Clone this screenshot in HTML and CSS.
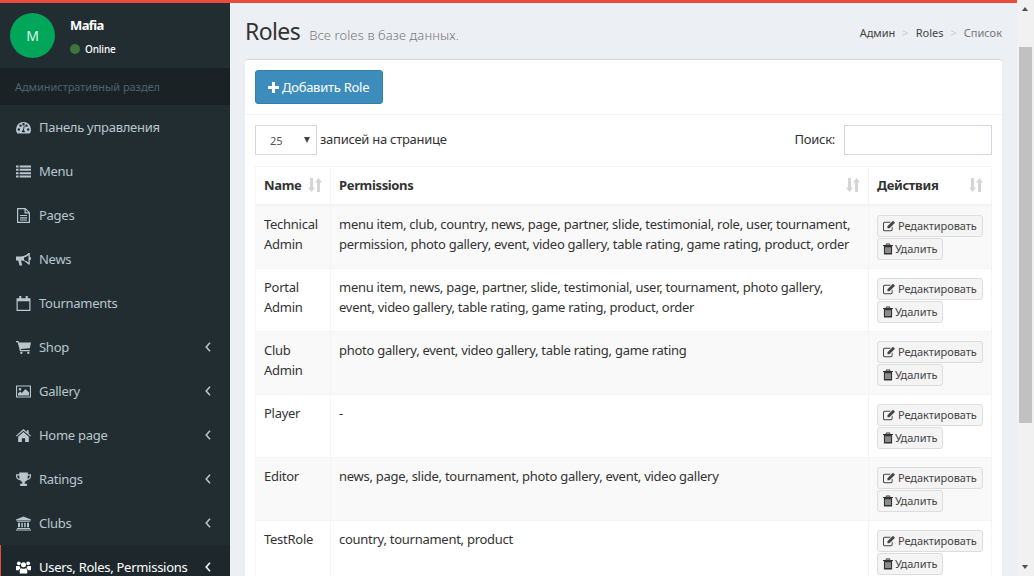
FILE: index.html
```html
<!DOCTYPE html>
<html lang="ru">
<head>
<meta charset="utf-8">
<title>Roles</title>
<link rel="stylesheet" href="styles.css">
</head>
<body>
<svg class="defs" width="0" height="0" aria-hidden="true">
  <defs>
    <symbol id="i-gauge" viewBox="0 0 16 14"><path fill-rule="evenodd" d="M8 1a8 8 0 0 0-8 8c0 1.600.4 3 1.200 4.200.1.200.3.300.5.300h12.600c.2 0 .4-.1.500-.3A8 8 0 0 0 16 9a8 8 0 0 0-8-8zM3 10.500a1.300 1.300 0 1 1 0-2.600 1.300 1.300 0 0 1 0 2.600zm1.800-4.200a1.300 1.300 0 1 1 0-2.600 1.300 1.300 0 0 1 0 2.600zM8 4.800a1.300 1.300 0 1 1 0-2.600 1.300 1.300 0 0 1 0 2.600zm1.300 7.200H6.700a1.500 1.500 0 0 1 .7-2.400l1-4.600.9.200-1 4.600a1.500 1.500 0 0 1 1 2.200zm1.900-5.700a1.300 1.300 0 1 1 0-2.600 1.300 1.300 0 0 1 0 2.600zm1.800 4.200a1.300 1.300 0 1 1 0-2.600 1.300 1.300 0 0 1 0 2.600z"/></symbol>
    <symbol id="i-list" viewBox="0 0 15 12"><path d="M0 0h2.600v2H0zM3.600 0H15v2H3.600zM0 3.300h2.600v2H0zM3.600 3.300H15v2H3.600zM0 6.700h2.600v2H0zM3.600 6.700H15v2H3.600zM0 10h2.600v2H0zM3.600 10H15v2H3.600z"/></symbol>
    <symbol id="i-file" viewBox="0 0 13 15"><path fill-rule="evenodd" d="M0 0h8.500L13 4.500V15H0zM1.200 1.200v12.600h10.600V5.500H7.500V1.200zM8.700 1.700v2.600h2.600zM3 7h7v1.100H3zM3 9.300h7v1.100H3zM3 11.500h7v1.100H3z"/></symbol>
    <symbol id="i-bullhorn" viewBox="0 0 15 13"><path fill-rule="evenodd" d="M12.500 0h1.300v4a1.500 1.500 0 0 1 0 3v4.500h-1.300L9.500 9C8 8 6.500 7.700 5 7.600l1.200 4.900H3.500L2.300 7.500H0v-4h4.500c3 0 6-1.300 8-3.500zM12.500 2.200c-1.500 1.200-3 2-4.500 2.300v2.700c1.500.3 3 1.100 4.500 2.300z"/></symbol>
    <symbol id="i-calendar" viewBox="0 0 13 14"><path fill-rule="evenodd" d="M2.500 0h2v2h4V0h2v2H13v12H0V2h2.500zM1.100 5v7.900h10.800V5z"/></symbol>
    <symbol id="i-cart" viewBox="0 0 14 12"><path d="M0 0h2.400l.5 1.400H14l-1.100 5.200-8.500.8.300 1h8.200v1.200H3.700L1.600 1.200H0z"/><circle cx="5" cy="11" r="1.100"/><circle cx="11.500" cy="11" r="1.100"/></symbol>
    <symbol id="i-picture" viewBox="0 0 15 12"><path fill-rule="evenodd" d="M0 0h15v12H0zM1.100 1.100v9.800h12.800V1.100zM4 2.500a1.300 1.300 0 1 1 0 2.600 1.300 1.300 0 0 1 0-2.600zM2 10V8l2.200-2 1.600 1.500L9.500 3.500 13 7v3z"/></symbol>
    <symbol id="i-home" viewBox="0 0 14 12"><path d="M7 0l3 2.700V1h1.800v3.300L14 6.200l-.7.800L7 1.500.7 7 0 6.200z"/><path d="M7 2.800l5 4.400V12H8.500V8.500h-3V12H2V7.200z"/></symbol>
    <symbol id="i-trophy" viewBox="0 0 14 13"><path fill-rule="evenodd" d="M3 0h8v1.500h3v2c0 2-1.800 3.500-3.800 3.600-.5.700-1.200 1.200-2 1.400V10.500h2V12.500H3.800V10.500h2V8.500c-.8-.2-1.500-.7-2-1.400C1.800 7 0 5.500 0 3.500v-2h3zM1.200 2.700v.8c0 1.200.9 2.100 2.200 2.400-.3-.9-.4-2-.4-3.200zM12.800 2.700H11c0 1.200-.1 2.300-.4 3.200 1.300-.3 2.200-1.200 2.200-2.400z"/></symbol>
    <symbol id="i-bank" viewBox="0 0 15 14"><path d="M7.500 0L15 3v1H0V3zM1 4.800h13v.8H1zM2 6.300h2v4.500H2zM5.300 6.300h1.500v4.500H5.300zM8.200 6.300h1.500v4.500H8.200zM11 6.300h2v4.500h-2zM1 11.500h13v1H1zM0 13h15v1H0z"/></symbol>
    <symbol id="i-users" viewBox="0 0 16 13"><circle cx="3" cy="2" r="2"/><circle cx="13" cy="2" r="2"/><circle cx="8" cy="3.500" r="2.700"/><path d="M0 5h3.600c.3 1 .9 1.800 1.500 2.200C3.800 7.700 3 8.700 3 9.300H0zM16 5h-3.600c-.3 1-.9 1.800-1.500 2.200 1.300.5 2.100 1.500 2.100 2.100H16zM4 13V9.500C4 8.200 5.200 7.500 6 7.200c1.200.8 2.800.8 4 0 .8.300 2 1 2 2.300V13z"/></symbol>
    <symbol id="i-left" viewBox="0 0 6 10"><path d="M5 .8L1.200 5 5 9.200" fill="none" stroke="currentColor" stroke-width="1.500"/></symbol>
    <symbol id="i-plus" viewBox="0 0 11 11"><path d="M4 0h3v4h4v3H7v4H4V7H0V4h4z"/></symbol>
    <symbol id="i-sort" viewBox="0 0 14 14"><path d="M2 0h3v9.500h2L3.500 14 0 9.500h2zM9 14V4.500H7L10.500 0 14 4.500h-2V14z"/></symbol>
    <symbol id="i-edit" viewBox="0 0 13 12"><path d="M1.800 1.500h6.700L7.400 2.600H2a.9.900 0 0 0-.9.900v6.200c0 .5.400.9.900.9h6.500c.5 0 .9-.4.900-.9V7.600l1-1v3.300c0 1-.8 1.800-1.800 1.800H1.800C.8 11.700 0 10.900 0 9.900V3.300C0 2.300.8 1.500 1.800 1.500z"/><path d="M10.800.2L13 2.400 7 8.400H4.800V6.200z"/></symbol>
    <symbol id="i-trash" viewBox="0 0 11 12"><path fill-rule="evenodd" d="M3.500 0h4l.7 1.500H11v1.200H10V12H1V2.700H0V1.500h2.800zM4 1l-.3.500h3.600L7 1zM2.800 4v6.500h1V4zM5 4v6.500h1V4zM7.200 4v6.500h1V4z"/></symbol>
  </defs>
</svg>
<div class="shell">
  <div class="page">
    <div class="topbar"></div>
    <div class="layout">
      <aside class="sidebar">
        <div class="user-panel">
          <div class="avatar">M</div>
          <div class="user-info">
            <div class="user-name">Mafia</div>
            <div class="user-status"><span class="status-dot"></span>Online</div>
          </div>
        </div>
        <div class="nav-header">Административный раздел</div>
        <nav class="nav">
          <a class="nav-item"><svg class="nav-icon"><use href="#i-gauge"/></svg><span class="nav-label">Панель управления</span></a>
          <a class="nav-item"><svg class="nav-icon"><use href="#i-list"/></svg><span class="nav-label">Menu</span></a>
          <a class="nav-item"><svg class="nav-icon"><use href="#i-file"/></svg><span class="nav-label">Pages</span></a>
          <a class="nav-item"><svg class="nav-icon"><use href="#i-bullhorn"/></svg><span class="nav-label">News</span></a>
          <a class="nav-item"><svg class="nav-icon"><use href="#i-calendar"/></svg><span class="nav-label">Tournaments</span></a>
          <a class="nav-item"><svg class="nav-icon"><use href="#i-cart"/></svg><span class="nav-label">Shop</span><svg class="nav-caret"><use href="#i-left"/></svg></a>
          <a class="nav-item"><svg class="nav-icon"><use href="#i-picture"/></svg><span class="nav-label">Gallery</span><svg class="nav-caret"><use href="#i-left"/></svg></a>
          <a class="nav-item"><svg class="nav-icon"><use href="#i-home"/></svg><span class="nav-label">Home page</span><svg class="nav-caret"><use href="#i-left"/></svg></a>
          <a class="nav-item"><svg class="nav-icon"><use href="#i-trophy"/></svg><span class="nav-label">Ratings</span><svg class="nav-caret"><use href="#i-left"/></svg></a>
          <a class="nav-item"><svg class="nav-icon"><use href="#i-bank"/></svg><span class="nav-label">Clubs</span><svg class="nav-caret"><use href="#i-left"/></svg></a>
          <a class="nav-item is-active"><svg class="nav-icon"><use href="#i-users"/></svg><span class="nav-label">Users, Roles, Permissions</span><svg class="nav-caret"><use href="#i-left"/></svg></a>
        </nav>
      </aside>
      <main class="content">
        <header class="content-header">
          <h1 class="title">Roles<small class="subtitle">Все roles в базе данных.</small></h1>
          <ol class="breadcrumb">
            <li>Админ</li>
            <li class="sep">&gt;</li>
            <li>Roles</li>
            <li class="sep">&gt;</li>
            <li class="crumb-current">Список</li>
          </ol>
        </header>
        <section class="box">
          <div class="box-header">
            <button class="btn-add"><svg class="plus-icon"><use href="#i-plus"/></svg>Добавить Role</button>
          </div>
          <div class="box-body">
            <div class="controls">
              <label class="length">
                <span class="select"><span>25</span><span class="select-arrow"></span></span>
                <span class="control-text">записей на странице</span>
              </label>
              <label class="search"><span class="control-text">Поиск:</span><span class="search-input"></span></label>
            </div>
            <table class="table">
              <colgroup><col class="col-name"><col><col class="col-actions"></colgroup>
              <thead>
                <tr>
                  <th><div class="th-inner">Name<svg class="sort-icon"><use href="#i-sort"/></svg></div></th>
                  <th><div class="th-inner">Permissions<svg class="sort-icon"><use href="#i-sort"/></svg></div></th>
                  <th><div class="th-inner">Действия<svg class="sort-icon"><use href="#i-sort"/></svg></div></th>
                </tr>
              </thead>
              <tbody>
                <tr><td>Technical Admin</td><td>menu item, club, country, news, page, partner, slide, testimonial, role, user, tournament, permission, photo gallery, event, video gallery, table rating, game rating, product, order</td><td class="actions"><a class="btn-xs"><svg class="btn-icon"><use href="#i-edit"/></svg>Редактировать</a><a class="btn-xs"><svg class="btn-icon trash"><use href="#i-trash"/></svg>Удалить</a></td></tr>
                <tr><td>Portal Admin</td><td>menu item, news, page, partner, slide, testimonial, user, tournament, photo gallery, event, video gallery, table rating, game rating, product, order</td><td class="actions"><a class="btn-xs"><svg class="btn-icon"><use href="#i-edit"/></svg>Редактировать</a><a class="btn-xs"><svg class="btn-icon trash"><use href="#i-trash"/></svg>Удалить</a></td></tr>
                <tr><td>Club Admin</td><td>photo gallery, event, video gallery, table rating, game rating</td><td class="actions"><a class="btn-xs"><svg class="btn-icon"><use href="#i-edit"/></svg>Редактировать</a><a class="btn-xs"><svg class="btn-icon trash"><use href="#i-trash"/></svg>Удалить</a></td></tr>
                <tr><td>Player</td><td>-</td><td class="actions"><a class="btn-xs"><svg class="btn-icon"><use href="#i-edit"/></svg>Редактировать</a><a class="btn-xs"><svg class="btn-icon trash"><use href="#i-trash"/></svg>Удалить</a></td></tr>
                <tr><td>Editor</td><td>news, page, slide, tournament, photo gallery, event, video gallery</td><td class="actions"><a class="btn-xs"><svg class="btn-icon"><use href="#i-edit"/></svg>Редактировать</a><a class="btn-xs"><svg class="btn-icon trash"><use href="#i-trash"/></svg>Удалить</a></td></tr>
                <tr><td>TestRole</td><td>country, tournament, product</td><td class="actions"><a class="btn-xs"><svg class="btn-icon"><use href="#i-edit"/></svg>Редактировать</a><a class="btn-xs"><svg class="btn-icon trash"><use href="#i-trash"/></svg>Удалить</a></td></tr>
              </tbody>
            </table>
          </div>
        </section>
      </main>
    </div>
  </div>
  <div class="scrollbar">
    <span class="arrow-up"></span>
    <span class="thumb"></span>
    <span class="arrow-down"></span>
  </div>
</div>
</body>
</html>
```
FILE: styles.css
```css
* { box-sizing: border-box; }
html, body { margin: 0; height: 100%; overflow: hidden; }
body { font-family: "Noto Sans", "Liberation Sans", sans-serif; font-size: 13px; line-height: 20px; letter-spacing: -.27px; color: #333; background: #ecf0f5; }
.defs { position: absolute; }
.shell { display: flex; height: 576px; width: 1034px; overflow: hidden; }
.page { flex: 1; min-width: 0; display: flex; flex-direction: column; }
.topbar { height: 3px; background: #e74c3c; flex: none; }
.layout { flex: 1; display: flex; min-height: 0; }

.sidebar { width: 230px; flex: none; background: #222d32; overflow: hidden; }
.user-panel { height: 65px; display: flex; padding: 10px 0 0 10px; }
.avatar { width: 45px; height: 45px; border-radius: 50%; background: #00a65a; color: #dff5e9; font-size: 14px; display: flex; align-items: center; justify-content: center; flex: none; }
.user-info { margin-left: 15px; }
.user-name { color: #fff; font-weight: 700; font-size: 13px; letter-spacing: -.6px; line-height: 16px; margin-top: 4px; }
.user-status { color: #fff; font-size: 10px; font-weight: 500; letter-spacing: -.15px; line-height: 14px; margin-top: 9px; display: flex; align-items: center; }
.status-dot { width: 10px; height: 10px; border-radius: 50%; background: #3c763d; margin-right: 5px; }
.nav-header { height: 37px; background: #1a2226; color: #4b646f; font-size: 11px; letter-spacing: -.05px; padding: 9px 15px; line-height: 20px; }
.nav { display: flex; flex-direction: column; }
.nav-item { height: 44px; flex: none; display: flex; align-items: center; padding: 0 15px 0 16px; color: #b8c7ce; }
.nav-icon { width: 15px; height: 15px; fill: currentColor; flex: none; margin-right: 8px; }
.nav-label { flex: 1; white-space: nowrap; }
.nav-caret { width: 6px; height: 10px; color: #b8c7ce; flex: none; margin-right: 4px; }
.nav-item.is-active { background: #1e282c; color: #fff; border-left: 1px solid #e74c3c; padding-left: 15px; }
.nav-item.is-active .nav-caret { color: #fff; }

.content { flex: 1; min-width: 0; padding: 0 15px; overflow: hidden; }
.content-header { height: 56px; display: flex; align-items: flex-start; justify-content: space-between; padding-top: 15px; }
.title { margin: 0; font-size: 23px; font-weight: 400; line-height: 26px; letter-spacing: -.6px; color: #333; }
.subtitle { font-size: 13px; font-weight: 300; letter-spacing: .12px; color: #777; margin-left: 9px; }
.breadcrumb { list-style: none; margin: 5px 0 0; padding: 0; display: flex; font-size: 11px; letter-spacing: 0; line-height: 20px; color: #444; gap: 7px; }
.sep { color: #ccc; }
.crumb-current { color: #777; }

.box { background: #fff; border-top: 1px solid #d2d6de; border-radius: 3px; box-shadow: 0 1px 1px rgba(0,0,0,.1); }
.box-header { height: 55px; padding: 10px; border-bottom: 1px solid #f4f4f4; }
.btn-add { display: flex; align-items: center; height: 34px; width: 128px; padding: 0 0 0 12px; background: #3c8dbc; border: 1px solid #367fa9; border-radius: 3px; color: #fff; font: inherit; letter-spacing: inherit; white-space: nowrap; }
.plus-icon { width: 11px; height: 11px; fill: #fff; margin-right: 3px; flex: none; }
.box-body { padding: 10px; }
.controls { display: flex; justify-content: space-between; align-items: center; height: 30px; margin-bottom: 11px; }
.length, .search { display: flex; align-items: center; }
.control-text { margin-top: -2px; }
.select { position: relative; width: 62px; height: 30px; border: 1px solid #d2d6de; font-size: 11px; letter-spacing: 0; display: flex; align-items: center; padding: 1px 0 0 14px; margin-right: 3px; color: #555; }
.select-arrow { position: absolute; right: 6px; top: 11px; border-left: 3.500px solid transparent; border-right: 3.500px solid transparent; border-top: 6px solid #444; }
.search-input { width: 148px; height: 30px; border: 1px solid #d2d6de; margin-left: 9px; background: #fff; }

.table { width: 100%; border-collapse: collapse; table-layout: fixed; border: 1px solid #f4f4f4; }
.col-name { width: 75px; }
.col-actions { width: 123px; }
.table th, .table td { border: 1px solid #f4f4f4; padding: 8px; vertical-align: top; text-align: left; }
.table th { height: 38px; font-weight: 700; letter-spacing: -.35px; border-bottom-width: 2px; }
.table td { height: 63px; }
.table td.actions { padding-top: 9px; padding-bottom: 7px; }
.table tbody tr:nth-child(odd) { background: #f9f9f9; }
.th-inner { display: flex; justify-content: space-between; align-items: center; }
.sort-icon { width: 14px; height: 14px; fill: #000; opacity: .16; flex: none; }
.btn-xs { display: flex; align-items: center; width: fit-content; height: 22px; padding: 0 5px; margin-bottom: 1px; background: #f4f4f4; border: 1px solid #ddd; border-radius: 3px; font-size: 11px; letter-spacing: -.07px; color: #444; white-space: nowrap; }
.btn-icon { width: 12px; height: 12px; fill: #444; margin-right: 3px; flex: none; }
.btn-icon.trash { width: 10px; margin-right: 2px; fill: #333; }

.scrollbar { position: relative; width: 17px; flex: none; background: #f1f1f1; }
.thumb { position: absolute; left: 2px; width: 13px; top: 47px; height: 376px; background: #c1c1c1; }
.arrow-up { position: absolute; left: 5px; top: 7px; border-left: 3.500px solid transparent; border-right: 3.500px solid transparent; border-bottom: 4px solid #505050; }
.arrow-down { position: absolute; left: 5px; bottom: 7px; border-left: 3.500px solid transparent; border-right: 3.500px solid transparent; border-top: 4px solid #505050; }
```
